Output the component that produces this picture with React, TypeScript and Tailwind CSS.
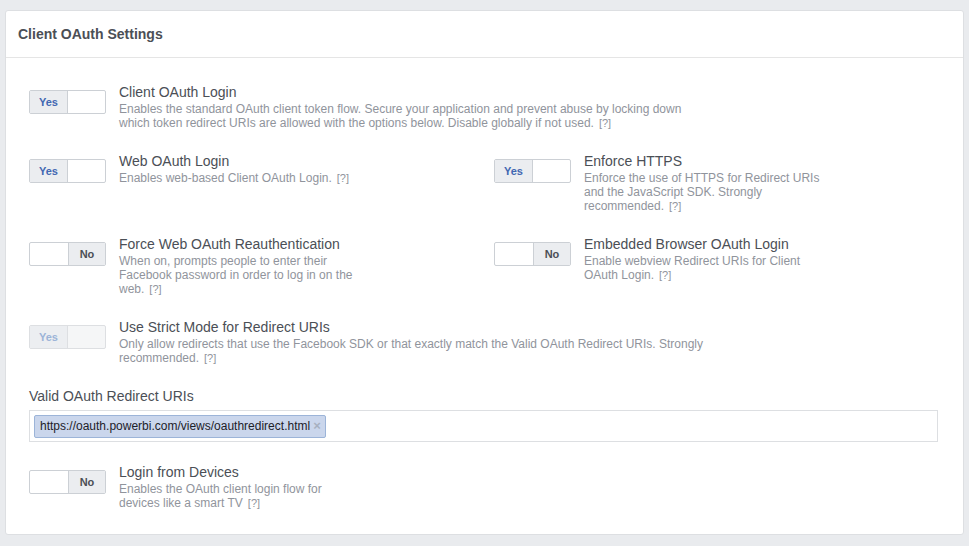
import React from 'react';

type ToggleProps = { on: boolean; disabled?: boolean };

function Toggle({ on, disabled }: ToggleProps) {
  const box = disabled
    ? 'border-[#dddfe2] bg-[#f5f6f7]'
    : 'border-[#ccd0d5] bg-white';
  return (
    <div className={`mt-[7px] flex h-[24px] w-[77px] shrink-0 overflow-hidden rounded-[2px] border ${box}`}>
      {on ? (
        <>
          <div
            className={`flex w-[38px] items-center justify-center border-r text-[11px] font-bold ${
              disabled
                ? 'border-[#dddfe2] bg-[#eceef1] text-[#9cb4d8]'
                : 'border-[#ccd0d5] bg-[#ebedf0] text-[#4267b2]'
            }`}
          >
            Yes
          </div>
          <div className="flex-1" />
        </>
      ) : (
        <>
          <div className="flex-1" />
          <div className="flex w-[37px] items-center justify-center border-l border-[#ccd0d5] bg-[#ebedf0] text-[11px] font-bold text-[#4b4f56]">
            No
          </div>
        </>
      )}
    </div>
  );
}

function Help() {
  return <span className="ml-[5px] inline-block text-[11px] leading-[14px] text-[#90949c]">[?]</span>;
}

type SettingProps = {
  on: boolean;
  disabled?: boolean;
  title: string;
  desc: string;
  wide?: boolean;
};

function Setting({ on, disabled, title, desc, wide }: SettingProps) {
  return (
    <div className="flex items-start">
      <Toggle on={on} disabled={disabled} />
      <div className="ml-[13px]">
        <div className="text-[14px] leading-[18px] text-[#4b4f56]">{title}</div>
        <div className={`mt-[1px] text-[12px] leading-[14px] text-[#90949c] ${wide ? 'max-w-[590px]' : 'max-w-[240px]'}`}>
          {desc}
          <Help />
        </div>
      </div>
    </div>
  );
}

export default function App() {
  return (
    <div
      className="min-h-[546px] bg-[#e9ebee] px-[5px] pt-[10px] pb-[10px]"
      style={{ fontFamily: '"Liberation Sans", Arial, Helvetica, sans-serif' }}
    >
      <div className="rounded-[3px] border border-[#dddfe2] bg-white">
        <div className="flex h-[47px] items-center border-b border-[#e5e5e5] px-[12px]">
          <h2 className="text-[14px] font-bold text-[#4b4f56]">Client OAuth Settings</h2>
        </div>

        <div className="flex flex-col gap-[22px] px-[23px] pt-[25px] pb-[24px]">
          <Setting
            on
            wide
            title="Client OAuth Login"
            desc="Enables the standard OAuth client token flow. Secure your application and prevent abuse by locking down which token redirect URIs are allowed with the options below. Disable globally if not used."
          />

          <div className="grid grid-cols-[465px_1fr]">
            <Setting on title="Web OAuth Login" desc="Enables web-based Client OAuth Login." wide />
            <Setting
              on
              title="Enforce HTTPS"
              desc="Enforce the use of HTTPS for Redirect URIs and the JavaScript SDK. Strongly recommended."
            />
          </div>

          <div className="grid grid-cols-[465px_1fr]">
            <Setting
              on={false}
              title="Force Web OAuth Reauthentication"
              desc="When on, prompts people to enter their Facebook password in order to log in on the web."
            />
            <Setting
              on={false}
              title="Embedded Browser OAuth Login"
              desc="Enable webview Redirect URIs for Client OAuth Login."
            />
          </div>

          <Setting
            on
            disabled
            wide
            title="Use Strict Mode for Redirect URIs"
            desc="Only allow redirects that use the Facebook SDK or that exactly match the Valid OAuth Redirect URIs. Strongly recommended."
          />

          <div className="mb-[-1px]">
            <div className="text-[14px] leading-[18px] text-[#4b4f56]">Valid OAuth Redirect URIs</div>
            <div className="mt-[5px] mr-[2px] flex h-[32px] items-center border border-[#dddfe2] px-[4px]">
              <span className="flex h-[23px] items-center rounded-[2px] border border-[#9cb4d8] bg-[#cad6ec] pl-[5px] pr-[4px] text-[12px] text-[#1d2129]">
                https://oauth.powerbi.com/views/oauthredirect.html
                <span className="ml-[3px] text-[13px] font-bold text-[#a7b0c0]">×</span>
              </span>
            </div>
          </div>

          <Setting
            on={false}
            title="Login from Devices"
            desc="Enables the OAuth client login flow for devices like a smart TV"
          />
        </div>
      </div>
    </div>
  );
}
